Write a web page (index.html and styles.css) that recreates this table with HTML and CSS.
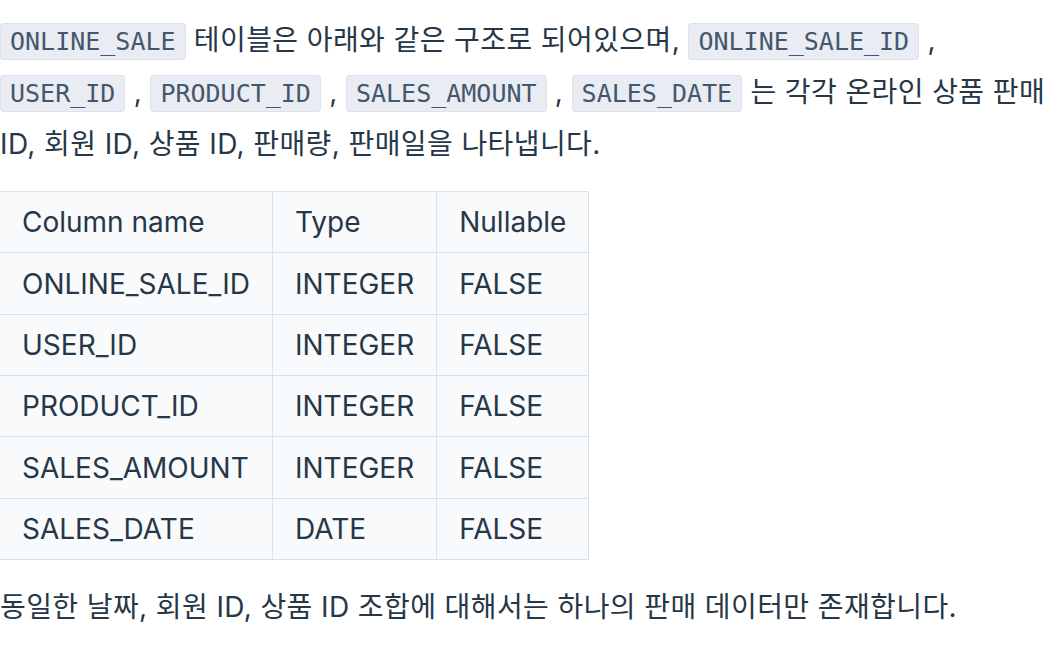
FILE: index.html
```html
<!DOCTYPE html>
<html lang="ko">
<head>
<meta charset="utf-8">
<link rel="stylesheet" href="styles.css">
</head>
<body>
<div class="content">
  <p class="para">
    <code>ONLINE_SALE</code> 테이블은 아래와 같은 구조로 되어있으며, <code>ONLINE_SALE_ID</code> , <code>USER_ID</code> , <code>PRODUCT_ID</code> , <code>SALES_AMOUNT</code> , <code>SALES_DATE</code> 는 각각 온라인 상품 판매 ID, 회원 ID, 상품 ID, 판매량, 판매일을 나타냅니다.
  </p>
  <table class="schema">
    <thead>
      <tr><th>Column name</th><th>Type</th><th>Nullable</th></tr>
    </thead>
    <tbody>
      <tr><td>ONLINE_SALE_ID</td><td>INTEGER</td><td>FALSE</td></tr>
      <tr><td>USER_ID</td><td>INTEGER</td><td>FALSE</td></tr>
      <tr><td>PRODUCT_ID</td><td>INTEGER</td><td>FALSE</td></tr>
      <tr><td>SALES_AMOUNT</td><td>INTEGER</td><td>FALSE</td></tr>
      <tr><td>SALES_DATE</td><td>DATE</td><td>FALSE</td></tr>
    </tbody>
  </table>
  <p class="para">동일한 날짜, 회원 ID, 상품 ID 조합에 대해서는 하나의 판매 데이터만 존재합니다.</p>
</div>
</body>
</html>
```
FILE: styles.css
```css
html, body {
  margin: 0;
  padding: 0;
  background: #ffffff;
}
.content {
  width: 1052px;
  padding-top: 15px;
  font-family: Inter, "Noto Sans CJK KR", sans-serif;
  font-size: 28px;
  color: #263747;
}
.para {
  margin: 0;
  line-height: 51px;
  letter-spacing: 0.4px;
}
.para code {
  font-family: "DejaVu Sans Mono", monospace;
  font-size: 25px;
  letter-spacing: 0;
  color: #44576c;
  background: #e9ecf3;
  border: 1px solid #dbe2ea;
  border-radius: 4px;
  padding: 3px 9px;
}
.schema {
  margin: 21px 0 22px -1px;
  border-collapse: collapse;
  background: #f9fafc;
  font-size: 28px;
}
.schema th, .schema td {
  border: 1px solid #d7e2eb;
  padding: 0 22px;
  height: 60.35px;
  line-height: 40px;
  text-align: left;
  font-weight: 400;
  white-space: nowrap;
}
```
